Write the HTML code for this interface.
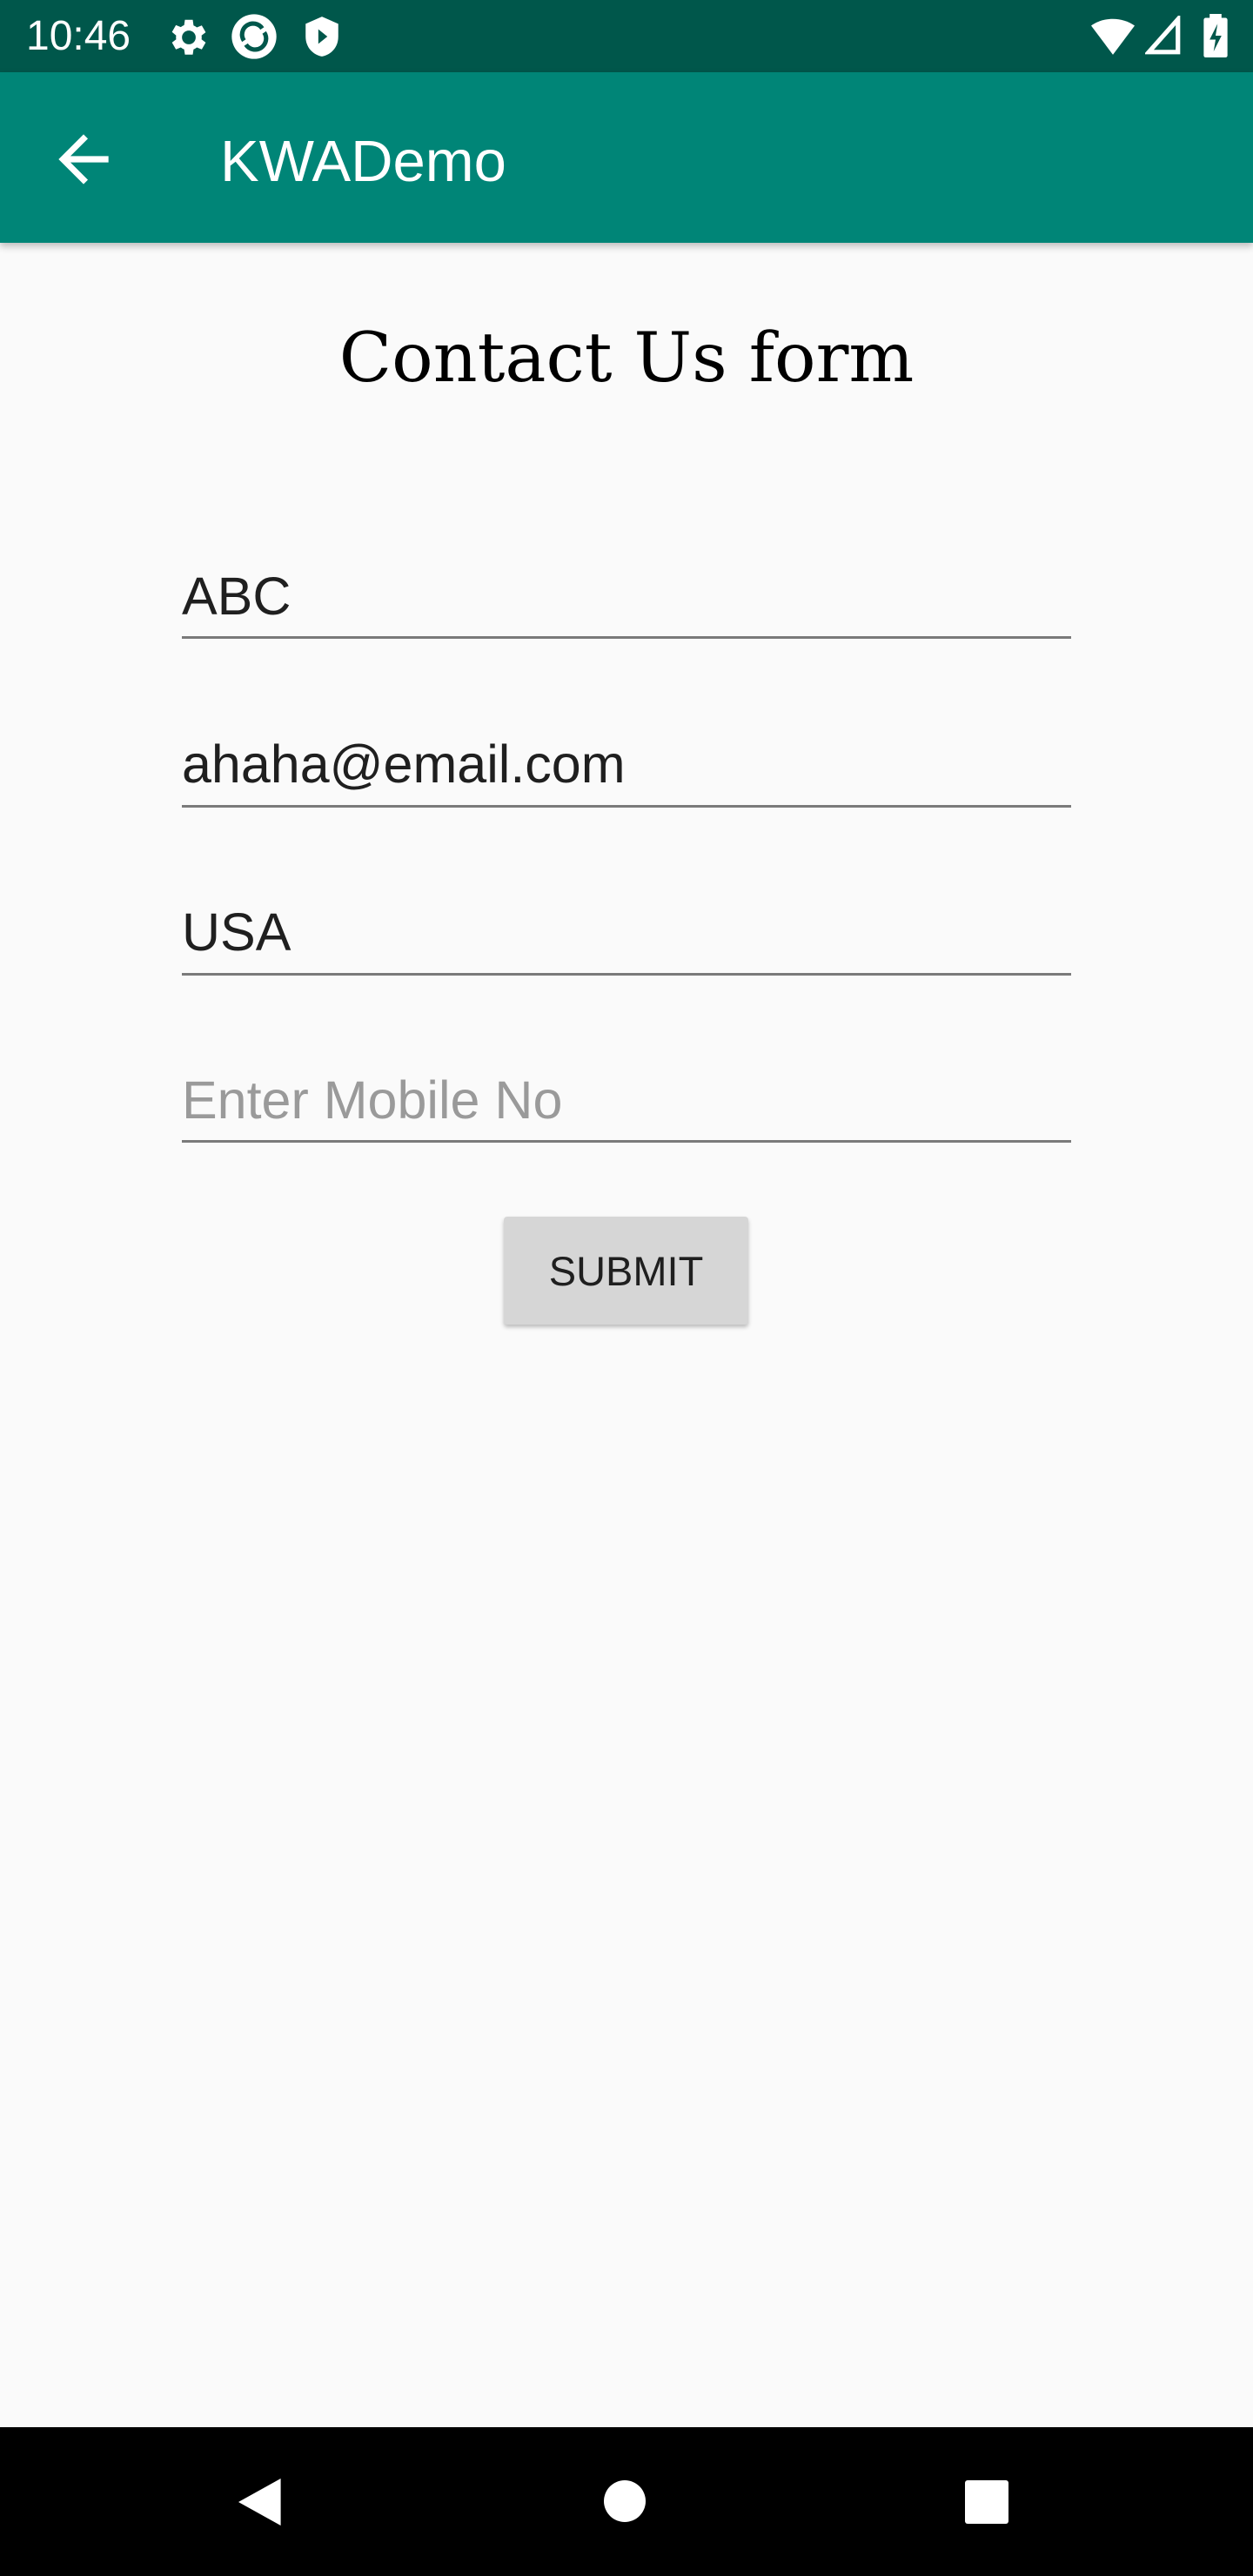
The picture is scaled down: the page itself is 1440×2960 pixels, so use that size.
<!DOCTYPE html>
<html><head><meta charset="utf-8"><style>
*{margin:0;padding:0;box-sizing:border-box}
body{width:1440px;height:2960px;background:#fafafa;position:relative;overflow:hidden;font-family:"Liberation Sans",sans-serif}
.sb{position:absolute;top:0;left:0;width:1440px;height:83px;background:#00574b}
.ab{position:absolute;top:83px;left:0;width:1440px;height:196px;background:#008577;box-shadow:0 4px 8px rgba(0,0,0,.25)}
.t{position:absolute;white-space:nowrap}
.field{position:absolute;left:209px;width:1022px;height:3px;background:#7a7a7a}
.nav{position:absolute;top:2789px;left:0;width:1440px;height:171px;background:#000}
</style></head><body>
<div class="sb">
<div class="t" style="left:30px;top:14px;font-size:48px;color:#fff">10:46</div>
<svg style="position:absolute;left:186px;top:16px" width="58" height="54" viewBox="0 0 24 24"><path fill="#fff" d="M19.4 13a7 7 0 000-2l2.1-1.6-2-3.5-2.5 1a7 7 0 00-1.7-1L14.9 3h-4l-.4 2.7a7 7 0 00-1.7 1l-2.5-1-2 3.5L6.4 11a7 7 0 000 2l-2.1 1.6 2 3.5 2.5-1a7 7 0 001.7 1l.4 2.7h4l.4-2.7a7 7 0 001.7-1l2.5 1 2-3.5zM12.9 15.5a3.5 3.5 0 110-7 3.5 3.5 0 010 7z"/></svg>
<svg style="position:absolute;left:264px;top:14px" width="56" height="56" viewBox="0 0 24 24"><circle cx="12" cy="12" r="11" fill="#fff"/><path d="M7 14a5 5 0 019-6M17 10a5 5 0 01-9 6" stroke="#00574b" stroke-width="2.2" fill="none"/></svg>
<svg style="position:absolute;left:348px;top:17px" width="44" height="50" viewBox="0 0 20 24"><path fill="#fff" d="M10 1l9 4v7c0 6-4 10-9 11C5 22 1 18 1 12V5z"/><path fill="#00574b" d="M8 8l5 4-5 4z"/></svg>
<svg style="position:absolute;left:1254px;top:20px" width="50" height="44" viewBox="0 0 24 20"><path fill="#fff" d="M0 4C7-1 17-1 24 4L12 20z"/></svg>
<svg style="position:absolute;left:1316px;top:18px" width="42" height="46" viewBox="0 0 20 22"><path fill="none" stroke="#fff" stroke-width="2.5" d="M18 2v18H2z"/></svg>
<svg style="position:absolute;left:1383px;top:16px" width="28" height="50" viewBox="0 0 12 22"><rect x="0" y="2" width="12" height="20" rx="1" fill="#fff"/><rect x="3" y="0" width="6" height="3" fill="#fff"/><path fill="#00574b" d="M7 5L3 13h3l-1 6 4-8H6z"/></svg>
</div>
<div class="ab">
<svg style="position:absolute;left:53px;top:57px" width="86" height="86" viewBox="0 0 24 24"><path fill="#fff" d="M20 11H7.8l5.6-5.6L12 4l-8 8 8 8 1.4-1.4L7.8 13H20z"/></svg>
<div class="t" style="left:253px;top:64px;font-size:67px;color:#fff">KWADemo</div>
</div>
<div class="t" style="left:0;width:1440px;text-align:center;top:365px;font-family:'DejaVu Serif','Liberation Serif',serif;font-size:79px;color:#000">Contact Us form</div>
<div class="t" style="left:209px;top:650px;font-size:61px;color:#1f1f1f">ABC</div>
<div class="field" style="top:731px"></div>
<div class="t" style="left:209px;top:843px;font-size:61px;color:#1f1f1f">ahaha@email.com</div>
<div class="field" style="top:925px"></div>
<div class="t" style="left:209px;top:1036px;font-size:61px;color:#1f1f1f">USA</div>
<div class="field" style="top:1118px"></div>
<div class="t" style="left:209px;top:1229px;font-size:61px;color:#9a9a9a">Enter Mobile No</div>
<div class="field" style="top:1310px"></div>
<div style="position:absolute;left:579px;top:1398px;width:281px;height:124px;background:#d6d6d6;border-radius:4px;box-shadow:0 3px 5px rgba(0,0,0,.25);text-align:center;line-height:126px;font-size:47px;color:#1f1f1f">SUBMIT</div>
<div class="nav">
<svg style="position:absolute;left:274px;top:58px" width="54" height="56" viewBox="0 0 20 20"><path fill="#fff" d="M18 0v20L0 10z"/></svg>
<div style="position:absolute;left:694px;top:61px;width:48px;height:48px;border-radius:50%;background:#fff"></div>
<div style="position:absolute;left:1109px;top:61px;width:50px;height:50px;border-radius:3px;background:#fff"></div>
</div>
</body></html>
